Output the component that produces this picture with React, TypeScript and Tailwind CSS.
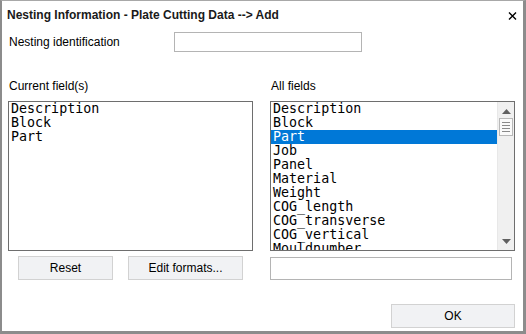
import React from "react";

const allFields = [
  "Description",
  "Block",
  "Part",
  "Job",
  "Panel",
  "Material",
  "Weight",
  "COG_length",
  "COG_transverse",
  "COG_vertical",
  "Mouldnumber",
];

const currentFields = ["Description", "Block", "Part"];

const ui = { fontFamily: '"Liberation Sans", Arial, sans-serif' };
const mono = { fontFamily: '"DejaVu Sans Mono", "Liberation Mono", monospace' };

const Button = ({ label, className }: { label: string; className: string }) => (
  <button
    className={`flex items-center justify-center bg-[#f1f2f4] border border-[#d2d2d2] text-[12px] text-black ${className}`}
    style={ui}
  >
    {label}
  </button>
);

export default function App() {
  return (
    <div
      className="w-[526px] h-[334px] bg-white border-t border-t-[#a8a8a8] border-l-2 border-l-[#8c8c8c] border-r-[3px] border-r-[#8c8c8c] border-b-[3px] border-b-[#8c8c8c] flex flex-col text-black"
      style={ui}
    >
      {/* title bar */}
      <div className="h-[28px] flex items-center justify-between pl-[5px] pr-[6px]">
        <span className="text-[12px] font-bold text-[#1a1a1a]">
          Nesting Information - Plate Cutting Data --&gt; Add
        </span>
        <svg width="9" height="8" viewBox="0 0 9 8" className="mt-[1px]">
          <path d="M1 0.5 L8 7.5 M8 0.5 L1 7.5" stroke="#000" strokeWidth="1.4" />
        </svg>
      </div>

      <div className="mt-[3px] flex items-center">
        <span className="w-[172px] pl-[7px] text-[12px]">Nesting identification</span>
        <div className="w-[188px] h-[20px] border border-[#b4b4b4] bg-white" />
      </div>

      <div className="mt-[27px] flex">
        {/* left column */}
        <div className="ml-[6px] w-[245px] flex flex-col">
          <span className="pl-[1px] text-[12px] leading-[14px]">Current field(s)</span>
          <div
            className="mt-[8px] h-[150px] border border-[#6e6e6e] pl-[2px] text-[13.33px] leading-[14px]"
            style={mono}
          >
            {currentFields.map((f) => (
              <div key={f}>{f}</div>
            ))}
          </div>
          <div className="mt-[5px] flex gap-[15px] pl-[10px]">
            <Button label="Reset" className="w-[95px] h-[24px]" />
            <Button label="Edit formats..." className="w-[115px] h-[24px]" />
          </div>
        </div>

        {/* right column */}
        <div className="ml-[17px] w-[245px] flex flex-col">
          <span className="pl-[1px] text-[12px] leading-[14px]">All fields</span>
          <div className="mt-[8px] h-[150px] border border-[#6e6e6e] flex overflow-hidden">
            <div className="flex-1 text-[13.33px] leading-[14px]" style={mono}>
              {allFields.map((f) => (
                <div
                  key={f}
                  className={`pl-[2px] h-[14px] ${f === "Part" ? "bg-[#0078d7] text-white" : ""}`}
                >
                  {f}
                </div>
              ))}
            </div>
            {/* scrollbar */}
            <div className="w-[17px] bg-[#f0f0f0] border-l border-l-[#e8e8e8] flex flex-col items-center">
              <svg width="9" height="5" viewBox="0 0 9 5" className="mt-[7px]">
                <path d="M0 5 L4.5 0 L9 5 Z" fill="#606060" />
              </svg>
              <div className="mt-[4px] w-[14px] h-[18px] bg-[#fafafa] border border-[#b8b8b8] flex flex-col items-center justify-center gap-[2px]">
                <div className="w-[8px] h-px bg-[#8a8a8a]" />
                <div className="w-[8px] h-px bg-[#8a8a8a]" />
                <div className="w-[8px] h-px bg-[#8a8a8a]" />
                <div className="w-[8px] h-px bg-[#8a8a8a]" />
              </div>
              <div className="flex-1" />
              <svg width="9" height="5" viewBox="0 0 9 5" className="mb-[6px]">
                <path d="M0 0 L4.5 5 L9 0 Z" fill="#606060" />
              </svg>
            </div>
          </div>
          <div className="mt-[6px] w-[242px] h-[23px] border border-[#b4b4b4] bg-white" />
        </div>
      </div>

      <div className="mt-[24px] flex justify-end pr-[8px]">
        <Button label="OK" className="w-[124px] h-[24px]" />
      </div>
    </div>
  );
}
